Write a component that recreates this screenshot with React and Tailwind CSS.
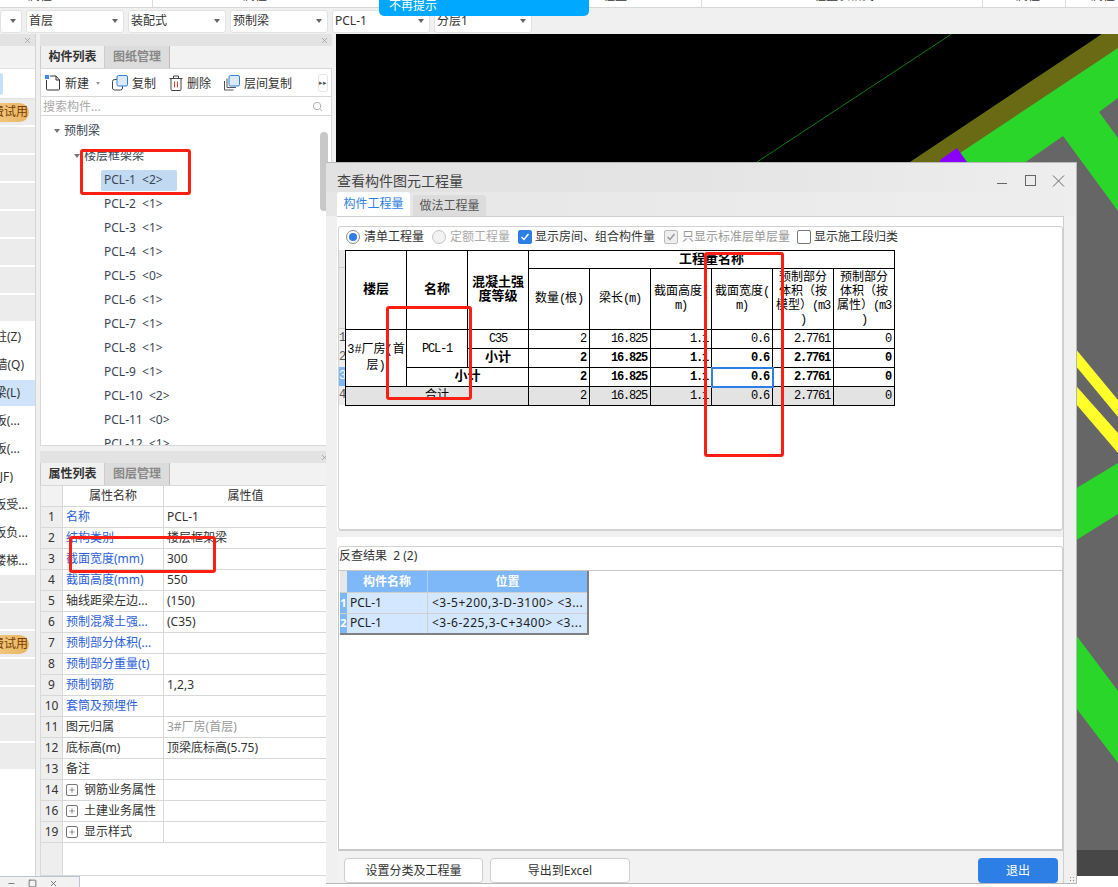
import React from 'react';
import { X, Search, Plus, Minus, Square } from 'lucide-react';

const sans = "font-['Noto_Sans','Noto_Sans_CJK_SC',sans-serif]";
const cellFont = "font-['Liberation_Mono','Noto_Sans_CJK_SC',monospace]";

const dropdowns = ['首层', '装配式', '预制梁', 'PCL-1', '分层1'];

const treeItems = [
  'PCL-1 <2>', 'PCL-2 <1>', 'PCL-3 <1>', 'PCL-4 <1>', 'PCL-5 <0>', 'PCL-6 <1>',
  'PCL-7 <1>', 'PCL-8 <1>', 'PCL-9 <1>', 'PCL-10 <2>', 'PCL-11 <0>', 'PCL-12 <1>',
];

const sideLabels = [
  { text: '柱(Z)', pad: 'pr-[14px]' },
  { text: '墙(Q)', pad: 'pr-[11px]' },
  { text: '梁(L)', pad: 'pr-[15px]', active: true },
  { text: '板(...', pad: 'pr-[15px]' },
  { text: '板(...', pad: 'pr-[15px]' },
  { text: '(JF)', pad: 'pr-[22px]' },
  { text: '板受...', pad: 'pr-[7px]' },
  { text: '板负...', pad: 'pr-[7px]' },
  { text: '楼梯...', pad: 'pr-[7px]' },
];

const props = [
  ['1', '名称', 'PCL-1', 'link'],
  ['2', '结构类别', '楼层框架梁', 'link'],
  ['3', '截面宽度(mm)', '300', 'link'],
  ['4', '截面高度(mm)', '550', 'link'],
  ['5', '轴线距梁左边...', '(150)', ''],
  ['6', '预制混凝土强...', '(C35)', 'link'],
  ['7', '预制部分体积(...', '', 'link'],
  ['8', '预制部分重量(t)', '', 'link'],
  ['9', '预制钢筋', '1,2,3', 'link'],
  ['10', '套筒及预埋件', '', 'link'],
  ['11', '图元归属', '3#厂房(首层)', 'muted'],
  ['12', '底标高(m)', '顶梁底标高(5.75)', ''],
  ['13', '备注', '', ''],
  ['14', '钢筋业务属性', '', 'group'],
  ['16', '土建业务属性', '', 'group'],
  ['19', '显示样式', '', 'group'],
];

const Dropdown = ({ label, className = 'w-[98px]' }) => (
  <div className={`${className} h-[23px] shrink-0 flex items-center justify-between bg-white border border-[#e2e2e2] rounded-[3px] pl-[2px] pr-[5px] text-[#333]`}>
    <span>{label}</span>
    <span className="w-0 h-0 border-x-[3px] border-x-transparent border-t-[4px] border-t-[#666]" />
  </div>
);

const PanelHeader = () => (
  <div className="h-[12px] bg-[#e3e3e3] flex items-center justify-end pr-[3px] shrink-0">
    <X size={9} className="text-[#999]" />
  </div>
);

const PanelTabs = ({ first, second }) => (
  <div className="h-[23px] flex bg-[#f2f2f2] border-b border-[#d8d8d8] shrink-0">
    <div className="w-[65px] flex items-center justify-center bg-[#f0f0f0] border-x border-[#ccc] font-bold text-[#333]">{first}</div>
    <div className="w-[65px] flex items-center justify-center bg-[#dcdcdc] border-r border-[#bbb] font-bold text-[#888]">{second}</div>
  </div>
);

const NewIcon = () => (
  <svg width="16" height="16" viewBox="0 0 16 16" fill="none">
    <path d="M1.5 5V14a1 1 0 0 0 1 1h11a1 1 0 0 0 1-1V5l-3.5-4H5" stroke="#333" />
    <path d="M11 1v4h3.5" stroke="#333" />
    <rect x="0" y="0" width="4" height="4" fill="#3d8bec" />
  </svg>
);

const CopyIcon = () => (
  <svg width="16" height="16" viewBox="0 0 16 16" fill="none">
    <rect x="0.5" y="4.5" width="10" height="10.5" rx="2" stroke="#444" />
    <rect x="5" y="0.5" width="10.5" height="10.5" rx="1.5" fill="#dcebfb" stroke="#2e7fe5" />
  </svg>
);

const TrashIcon = () => (
  <svg width="14" height="16" viewBox="0 0 14 16" fill="none">
    <path d="M0.5 3.5h13M4.5 3V1h5v2M2 4v10.5a1 1 0 0 0 1 1h8a1 1 0 0 0 1-1V4" stroke="#444" />
    <path d="M5.5 6.5v6M8.5 6.5v6" stroke="#e0352b" />
  </svg>
);

const LayerCopyIcon = () => (
  <svg width="16" height="16" viewBox="0 0 16 16" fill="none">
    <path d="M0.5 6v9h9" stroke="#555" />
    <path d="M3 3.5v9h9" stroke="#555" />
    <rect x="5" y="0.5" width="10.5" height="10.5" rx="1.5" fill="#dcebfb" stroke="#2e7fe5" />
  </svg>
);

const ToolButton = ({ icon, label, className }) => (
  <div className={`flex items-center gap-[4px] text-[#333] ${className}`}>
    {icon}
    <span className="pt-[2px]">{label}</span>
  </div>
);

const Radio = ({ on }) => (
  <span className={`w-[14px] h-[14px] shrink-0 rounded-full border flex items-center justify-center ${on ? 'border-[#8a8a8a] bg-white' : 'border-[#c4c4c4] bg-[#f2f2f2]'}`}>
    {on && <span className="w-[8px] h-[8px] rounded-full bg-[#2e7fe5]" />}
  </span>
);

const Checkbox = ({ variant }) => {
  const look = {
    on: 'bg-[#2e7fe5] border-[#2e7fe5]',
    off: 'bg-white border-[#777]',
    disabled: 'bg-[#eeeeee] border-[#bbb]',
  }[variant];
  return (
    <span className={`w-[14px] h-[14px] shrink-0 rounded-[2px] border flex items-center justify-center ${look}`}>
      {variant !== 'off' && (
        <svg width="10" height="10" viewBox="0 0 10 10" fill="none">
          <path d="M1.5 5l2.5 2.5L8.5 2" stroke={variant === 'on' ? '#fff' : '#999'} strokeWidth="1.5" />
        </svg>
      )}
    </span>
  );
};

const AnnotationBox = ({ className }) => (
  <div className={`absolute border-[3px] border-[#ff1f12] rounded-[3px] pointer-events-none ${className}`} />
);

const GrayRows = ({ count, badgeAt }) =>
  Array.from({ length: count }).map((_, i) => (
    <div key={i} className="h-[28px] shrink-0 pb-[2px]">
      <div className="h-[26px] bg-[#ececec] flex items-center justify-end overflow-hidden">
        {i === badgeAt && (
          <div className="h-[19px] mr-[6px] pl-[4px] pr-[1px] shrink-0 rounded-r-full whitespace-nowrap flex items-center text-[#7a3b00] bg-gradient-to-r from-[#f5cf8f] to-[#e9b662]">
            免费试用
          </div>
        )}
      </div>
    </div>
  ));

const LeftColumn = () => (
  <div className="w-[36px] shrink-0 flex flex-col bg-white border-r border-[#d4d4d4] overflow-hidden">
    <PanelHeader />
    <div className="h-[23px] bg-[#f2f2f2] border-b border-[#e2e2e2] shrink-0" />
    <div className="h-[30px] shrink-0 border-b border-[#e2e2e2] flex items-center">
      <div className="w-[3px] h-[22px] bg-[#c7dffa] rounded-r-[3px]" />
    </div>
    <div className="flex flex-col">
      <GrayRows count={8} badgeAt={0} />
      {sideLabels.map((s, i) => (
        <div key={i} className="h-[28px] flex items-center justify-end overflow-hidden">
          <div className={`w-full h-[26px] flex items-center justify-end whitespace-nowrap text-[#333] ${s.pad} ${s.active ? 'bg-[#cfe4fb]' : ''}`}>
            {s.text}
          </div>
        </div>
      ))}
      <GrayRows count={7} badgeAt={2} />
    </div>
  </div>
);

const MiddleColumn = () => (
  <div className="w-[292px] shrink-0 flex flex-col ml-[4px]">
    <PanelHeader />
    <PanelTabs first="构件列表" second="图纸管理" />
    <div className="h-[28px] shrink-0 flex items-center bg-white border-x border-b border-[#d8d8d8] pl-[4px] relative">
      <ToolButton icon={<NewIcon />} label="新建" className="w-[67px]" />
      <span className="w-0 h-0 border-x-[2.5px] border-x-transparent border-t-[3px] border-t-[#999] absolute left-[55px] top-[13px]" />
      <ToolButton icon={<CopyIcon />} label="复制" className="w-[57px]" />
      <ToolButton icon={<TrashIcon />} label="删除" className="w-[55px]" />
      <ToolButton icon={<LayerCopyIcon />} label="层间复制" />
      <span className="ml-auto mr-[3px] w-[10px] h-[18px] bg-white border border-[#e5e5e5] rounded-[3px] text-[7px] leading-[16px] text-center text-[#555]">▸▸</span>
    </div>
    <div className="h-[19px] shrink-0 flex items-center justify-between bg-white border-x border-b border-[#d8d8d8] pl-[2px] pr-[8px] pt-[1px] text-[#aaa]">
      <span>搜索构件...</span>
      <Search size={11} className="text-[#aaa]" />
    </div>
    <div className="h-[330px] shrink-0 relative overflow-hidden bg-white border-x border-b border-[#d8d8d8] pt-[3px] text-[#3a4656]">
      <div className="h-[24px] flex items-center pl-[13px]">
        <span className="w-0 h-0 border-x-[3px] border-x-transparent border-t-[4px] border-t-[#777] mr-[4px]" />
        预制梁
      </div>
      <div className="h-[25px] flex items-center pl-[33px]">
        <span className="w-0 h-0 border-x-[3px] border-x-transparent border-t-[4px] border-t-[#777] mr-[4px]" />
        楼层框架梁
      </div>
      {treeItems.map((item, i) => (
        <div key={item} className="h-[24px] flex items-center pl-[60px]">
          <span className={`h-[21px] flex items-center pl-[3px] whitespace-pre ${i === 0 ? 'w-[76px] bg-[#c2d9f2] rounded-[2px]' : ''}`}>
            {item.replace(' ', '  ')}
          </span>
        </div>
      ))}
      <div className="absolute left-[279px] top-[16px] w-[8px] h-[79px] rounded-full bg-[#c8c8c8]" />
    </div>
    <div className="h-[5px] shrink-0" />
    <PanelHeader />
    <PanelTabs first="属性列表" second="图层管理" />
    <div className="flex-1 flex flex-col bg-white border-x border-b border-[#d8d8d8] text-[#333] overflow-hidden">
      <div className="h-[21px] shrink-0 flex border-b border-[#d8d8d8]">
        <div className="w-[22px] shrink-0 border-r border-[#d8d8d8] bg-[#f2f2f2]" />
        <div className="w-[101px] shrink-0 border-r border-[#d8d8d8] flex items-center justify-center">属性名称</div>
        <div className="w-[163px] flex items-center justify-center">属性值</div>
      </div>
      {props.map(([no, name, value, kind]) => (
        <div key={no} className="h-[21px] shrink-0 flex border-b border-[#d8d8d8]">
          <div className="w-[22px] shrink-0 border-r border-[#d8d8d8] bg-[#eeeeee] flex items-center justify-center">{no}</div>
          <div className={`w-[101px] shrink-0 border-r border-[#d8d8d8] flex items-center pl-[3px] whitespace-nowrap overflow-hidden ${kind === 'link' ? 'text-[#2b62dc]' : ''}`}>
            {kind === 'group' && (
              <span className="w-[12px] h-[12px] mr-[6px] border border-[#777] rounded-[2px] flex items-center justify-center">
                <Plus size={8} strokeWidth={1.5} />
              </span>
            )}
            {name}
          </div>
          <div className={`flex items-center pl-[3px] whitespace-nowrap ${kind === 'muted' ? 'text-[#999]' : ''}`}>{value}</div>
        </div>
      ))}
      <div className="flex-1 w-[22px] bg-[#eeeeee] border-r border-[#d8d8d8]" />
    </div>
  </div>
);

const CadCanvas = () => (
  <div className="flex-1 ml-[4px] bg-[#666666] overflow-hidden">
    <svg viewBox="336 34 782 842" className="block w-full h-full">
      <polygon points="336,34 1102,34 600,400 336,400" fill="#000" />
      <polygon points="1102,34 1118,34 1118,48 930,173 895,172" fill="#6b6a14" />
      <polygon points="1118,48 930,173 1010,173 1063,136 1118,211 1118,138 1099,112 1118,98" fill="#2bd62b" />
      <polygon points="940,160 957,148 967,162 967,170 940,170" fill="#8a00ff" />
      <line x1="951.6" y1="34" x2="757" y2="162" stroke="#0b7a0b" />
      <polygon points="1070,342 1118,400 1118,417 1070,359" fill="#ffff2a" />
      <polygon points="1070,379 1118,433 1118,453 1070,397" fill="#ffff2a" />
      <polygon points="1070,492 1118,463 1118,514 1070,544" fill="#2bd62b" />
      <polygon points="1070,627 1118,691 1118,763 1070,700" fill="#2bd62b" />
      <rect x="336" y="850" width="782" height="26" fill="#474747" />
    </svg>
  </div>
);

const ascii = 'tracking-[-1.2px]';
const numCell = 'border border-black p-0 pr-[3px] text-right text-[12px] tracking-[-1.2px]';
const headCell = 'border border-black p-0 text-center text-[12px] leading-[14px] font-normal';
const boldHead = 'border border-black p-0 text-center text-[13px] leading-[14px] font-bold';
const rowValues = ['2', '16.825', '1.1', '0.6', '2.7761', '0'];

const QtyRow = ({ bold, selectIndex, gray, children }) => (
  <tr className={`h-[19px] ${gray ? 'bg-[#e3e3e3]' : ''}`}>
    {children}
    {rowValues.map((v, i) => (
      <td
        key={i}
        className={`${numCell} ${bold ? 'font-bold' : ''} ${selectIndex === i ? 'outline-2 -outline-offset-1 outline-[#2e7fe5]' : ''}`}
      >
        {v}
      </td>
    ))}
  </tr>
);

const QtyTable = () => (
  <div className={`flex ${cellFont} text-black`}>
    <div className="w-[6px] shrink-0 flex flex-col overflow-hidden text-[12px] text-[#555]">
      <div className="h-[18px] bg-[#e8e8e8] border-b border-[#ccc]" />
      <div className="h-[61px] bg-[#e8e8e8] border-b border-[#ccc]" />
      {['1', '2', '3', '4'].map((n) => (
        <div key={n} className={`h-[19px] leading-[19px] ${n === '3' ? 'bg-[#7db8f8] text-white' : 'bg-[#eeeeee]'}`}>{n}</div>
      ))}
    </div>
    <table className="table-fixed w-[549px] border-collapse shrink-0">
      <colgroup>
        {Array.from({ length: 9 }).map((_, i) => <col key={i} className="w-[61px]" />)}
      </colgroup>
      <tbody>
        <tr className="h-[18px]">
          <th rowSpan={2} className={boldHead}>楼层</th>
          <th rowSpan={2} className={boldHead}>名称</th>
          <th rowSpan={2} className={boldHead}>混凝土强<br />度等级</th>
          <th colSpan={6} className={boldHead}>工程量名称</th>
        </tr>
        <tr className="h-[61px]">
          <th className={headCell}>数量<span className={ascii}>(</span>根<span className={ascii}>)</span></th>
          <th className={headCell}>梁长<span className={ascii}>(m)</span></th>
          <th className={headCell}>截面高度<span className={ascii}>(</span><br /><span className={ascii}>m)</span></th>
          <th className={headCell}>截面宽度<span className={ascii}>(</span><br /><span className={ascii}>m)</span></th>
          <th className={headCell}>预制部分<br />体积（按<br />模型）<span className={ascii}>(m3</span><br /><span className={ascii}>)</span></th>
          <th className={headCell}>预制部分<br />体积（按<br />属性）<span className={ascii}>(m3</span><br /><span className={ascii}>)</span></th>
        </tr>
        <QtyRow>
          <td rowSpan={3} className="border border-black p-0 text-center text-[12px] leading-[16px]">3#厂房(首<br />层)</td>
          <td rowSpan={2} className="border border-black p-0 text-center text-[12px] tracking-[-1.2px]">PCL-1</td>
          <td className="border border-black p-0 text-center text-[12px] tracking-[-1.2px]">C35</td>
        </QtyRow>
        <QtyRow bold>
          <td className={boldHead}>小计</td>
        </QtyRow>
        <QtyRow bold selectIndex={3}>
          <td colSpan={2} className={boldHead}>小计</td>
        </QtyRow>
        <QtyRow gray>
          <td colSpan={3} className="border border-black p-0 text-center text-[12px]">合计</td>
        </QtyRow>
      </tbody>
    </table>
  </div>
);

const ResultGrid = () => (
  <div className="ml-[1px] w-[249px] border-r-2 border-b-2 border-[#808080] text-[#222]">
    <div className="flex h-[21px]">
      <div className="w-[7px] bg-[#e8e8e8]" />
      <div className="w-[81px] bg-[#7eb8f9] border-r border-[#a9cffa] text-white font-bold flex items-center justify-center">构件名称</div>
      <div className="flex-1 bg-[#7eb8f9] text-white font-bold flex items-center justify-center">位置</div>
    </div>
    {[
      ['1', 'PCL-1', '<3-5+200,3-D-3100> <3...'],
      ['2', 'PCL-1', '<3-6-225,3-C+3400> <3...'],
    ].map(([n, name, pos]) => (
      <div key={n} className="flex h-[20.5px] bg-[#d3e7fe] border-t border-[#cfcfcf]">
        <div className="w-[7px] bg-[#7eb8f9] text-white font-bold text-[11px] flex items-center justify-center">{n}</div>
        <div className="w-[81px] border-r border-[#cfcfcf] flex items-center pl-[3px]">{name}</div>
        <div className="flex-1 flex items-center pl-[4px] whitespace-nowrap overflow-hidden tracking-[0.5px]">{pos}</div>
      </div>
    ))}
  </div>
);

const QuantityDialog = () => (
  <div className="absolute left-[326px] top-[162px] w-[751px] h-[722px] bg-[#f0f0f0] border-r border-b border-t border-[#b8b8b8] flex flex-col pl-[11px] pr-[12px] text-[#333]">
    <div className="h-[29px] shrink-0 flex items-end justify-between pb-[1px] -ml-[11px] -mr-[12px] pl-[11px] pr-[11px] bg-gradient-to-r from-[#e2e2e2] via-[#e4e4e4] to-[#eeeeee]">
      <span className="text-[14px] leading-[20px] text-[#444]">查看构件图元工程量</span>
      <svg width="68" height="12" viewBox="0 0 68 12" fill="none" stroke="#666" className="mb-[4px]">
        <path d="M0 8.5h10" />
        <rect x="28.5" y="0.5" width="10" height="10" />
        <path d="M56 0.5l11 11M67 0.5l-11 11" />
      </svg>
    </div>
    <div className="h-[24px] shrink-0 flex items-end gap-[3px] -ml-[11px] -mr-[12px] pl-[11px] bg-gradient-to-r from-[#e6e6e6] to-[#eeeeee]">
      <div className="w-[73px] h-[24px] bg-white rounded-t-[3px] flex items-center justify-center text-[#2e7fe5]">构件工程量</div>
      <div className="w-[73px] h-[21px] bg-[#dcdcdc] rounded-t-[3px] flex items-center justify-center text-[#555]">做法工程量</div>
    </div>
    <div className="flex-1 bg-white border-t border-[#cfcfcf] border-r flex flex-col">
      <div className="mt-[9px] ml-[1px] h-[305px] shrink-0 border border-[#d2d2d2] rounded-[3px] border-b-2">
        <div className="h-[23px] flex items-center pl-[7px] pb-[4px] whitespace-nowrap">
          <Radio on />
          <span className="ml-[4px] w-[68px] shrink-0">清单工程量</span>
          <Radio />
          <span className="ml-[4px] w-[68px] shrink-0 text-[#aaa]">定额工程量</span>
          <Checkbox variant="on" />
          <span className="ml-[3px] w-[129px] shrink-0">显示房间、组合构件量</span>
          <Checkbox variant="disabled" />
          <span className="ml-[4px] w-[115px] shrink-0 text-[#999]">只显示标准层单层量</span>
          <Checkbox variant="off" />
          <span className="ml-[3px]">显示施工段归类</span>
        </div>
        <QtyTable />
      </div>
      <div className="h-[6px] shrink-0 bg-[#f0f0f0]" />
      <div className="h-[9px] shrink-0" />
      <div className="h-[305px] shrink-0 flex flex-col ml-[1px]">
        <div className="h-[24px] shrink-0 flex items-center pb-[5px] border border-b-0 border-[#d2d2d2] rounded-t-[3px] whitespace-pre text-[#333]">反查结果  2 (2)</div>
        <div className="flex-1 border border-[#c8c8c8] border-b-2">
          <ResultGrid />
        </div>
      </div>
      <div className="flex-1 flex items-start pt-[7px] pl-[7px] pr-[5px] gap-[7px] bg-[#f2f2f2]">
        <button className="w-[139px] h-[25px] bg-white border border-[#cfcfcf] rounded-[4px] text-[#333]">设置分类及工程量</button>
        <button className="w-[140px] h-[25px] bg-white border border-[#cfcfcf] rounded-[4px] text-[#333]">导出到Excel</button>
        <button className="ml-auto w-[80px] h-[25px] bg-[#2e7fe5] rounded-[4px] text-white">退出</button>
      </div>
    </div>
    <div className="absolute right-[1px] bottom-[1px] w-[6px] h-[6px] bg-[radial-gradient(#888_1px,transparent_1px)] bg-[length:3px_3px]" />
  </div>
);

const App = () => (
  <div className={`relative w-[1118px] h-[887px] overflow-hidden bg-[#f0f0f0] text-[12px] leading-[16px] ${sans}`}>
    <div className="h-[8px] flex bg-white border-b border-[#d8d8d8] overflow-hidden text-[#333]">
      <div className="w-[153px] border-r border-[#ddd] pl-[28px] -mt-[12px]">属性</div>
      <div className="w-[549px] border-r border-[#ddd] pl-[90px] -mt-[12px]">属性<span className="ml-[324px]">工程量</span></div>
      <div className="w-[281px] border-r border-[#ddd] pl-[100px] -mt-[12px]">工程量表格式</div>
      <div className="w-[83px] border-r border-[#ddd] pl-[33px] -mt-[12px]">属性</div>
      <div className="pl-[25px] -mt-[12px]">属性</div>
    </div>
    <div className="h-[26px] flex items-center gap-[4px]">
      <Dropdown label="" className="w-[22px]" />
      {dropdowns.map((d) => <Dropdown key={d} label={d} />)}
    </div>
    <div className="h-[842px] flex">
      <LeftColumn />
      <MiddleColumn />
      <CadCanvas />
    </div>
    <div className="h-[11px] flex bg-white">
      <div className="w-[80px] h-[11px] bg-[#f2f2f2] border-t border-r border-[#b8c4d4] flex items-start gap-[12px] pl-[7px] pt-[2px] text-[#555]">
        <Minus size={9} />
        <Square size={9} />
        <X size={9} />
      </div>
    </div>

    {/* toast sliding in from the top */}
    <div className="absolute left-[379px] top-0 w-[210px] h-[16px] bg-[#00a8ff] rounded-b-[5px] pl-[10px] text-white overflow-hidden leading-[12px]">不再提示</div>

    <QuantityDialog />

    {/* red annotation boxes drawn over the screenshot */}
    <AnnotationBox className="left-[80px] top-[149px] w-[111px] h-[46px]" />
    <AnnotationBox className="left-[69px] top-[536px] w-[147px] h-[37px]" />
    <AnnotationBox className="left-[386px] top-[306px] w-[86px] h-[94px]" />
    <AnnotationBox className="left-[704px] top-[252px] w-[80px] h-[205px]" />
  </div>
);

export default App;
